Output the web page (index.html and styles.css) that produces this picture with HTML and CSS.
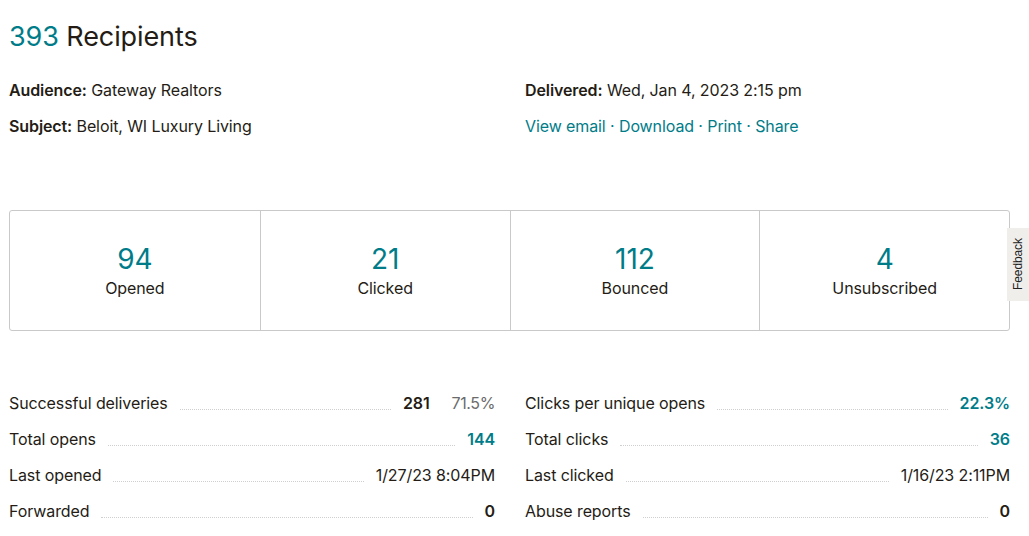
FILE: index.html
```html
<!DOCTYPE html>
<html>
<head>
<meta charset="utf-8">
<link rel="stylesheet" href="styles.css">
</head>
<body>
<main class="page">
  <h1 class="title"><span class="teal">393</span> Recipients</h1>
  <section class="info">
    <div class="info-col">
      <p class="info-line"><b>Audience:</b> Gateway Realtors</p>
      <p class="info-line"><b>Subject:</b> Beloit, WI Luxury Living</p>
    </div>
    <div class="info-col">
      <p class="info-line"><b>Delivered:</b> Wed, Jan 4, 2023 2:15 pm</p>
      <p class="info-line links"><a>View email</a> · <a>Download</a> · <a>Print</a> · <a>Share</a></p>
    </div>
  </section>
  <section class="stats">
    <div class="stat"><div class="num">94</div><div class="lbl">Opened</div></div>
    <div class="stat"><div class="num">21</div><div class="lbl">Clicked</div></div>
    <div class="stat"><div class="num">112</div><div class="lbl">Bounced</div></div>
    <div class="stat"><div class="num">4</div><div class="lbl">Unsubscribed</div></div>
  </section>
  <section class="summary">
    <div class="sum-col">
      <div class="row"><span class="k">Successful deliveries</span><span class="dots"></span><span class="v bold">281</span><span class="pct">71.5%</span></div>
      <div class="row"><span class="k">Total opens</span><span class="dots"></span><span class="v bold teal">144</span></div>
      <div class="row"><span class="k">Last opened</span><span class="dots"></span><span class="v">1/27/23 8:04PM</span></div>
      <div class="row"><span class="k">Forwarded</span><span class="dots"></span><span class="v bold">0</span></div>
    </div>
    <div class="sum-col">
      <div class="row"><span class="k">Clicks per unique opens</span><span class="dots"></span><span class="v bold teal">22.3%</span></div>
      <div class="row"><span class="k">Total clicks</span><span class="dots"></span><span class="v bold teal">36</span></div>
      <div class="row"><span class="k">Last clicked</span><span class="dots"></span><span class="v">1/16/23 2:11PM</span></div>
      <div class="row"><span class="k">Abuse reports</span><span class="dots"></span><span class="v bold">0</span></div>
    </div>
  </section>
</main>
<div class="feedback">Feedback</div>
</body>
</html>
```
FILE: styles.css
```css
* { box-sizing: border-box; }
html, body { margin: 0; padding: 0; background: #fff; }
body {
  font-family: Inter, "Noto Sans", sans-serif;
  color: #241c15;
  font-size: 16px;
  letter-spacing: -0.1px;
  overflow: hidden;
}
.page { padding: 19px 19px 0 9px; width: 1029px; }
.teal { color: #007c89; }
.title {
  margin: 0;
  font-size: 27px;
  font-weight: 400;
  line-height: 36px;
}
.info {
  display: grid;
  grid-template-columns: 516px 1fr;
  margin-top: 23px;
}
.info-line { margin: 0 0 12px; line-height: 24px; }
.info-line b { font-weight: 600; }
.links a { color: #007c89; }
.links { color: #007c89; }
.stats {
  margin-top: 60px;
  display: grid;
  grid-template-columns: repeat(4, 1fr);
  border: 1px solid #c9c9c9;
  border-radius: 3px;
  height: 121px;
}
.stat {
  display: flex;
  flex-direction: column;
  align-items: center;
  padding-top: 31px;
  border-left: 1px solid #c9c9c9;
}
.stat:first-child { border-left: none; }
.num { font-size: 28px; line-height: 34px; color: #007c89; }
.lbl { font-size: 16px; line-height: 24px; }
.summary {
  display: grid;
  grid-template-columns: 486px 485px;
  column-gap: 30px;
  margin-top: 60px;
}
.row {
  display: flex;
  align-items: baseline;
  height: 36px;
  line-height: 24px;
}
.dots {
  flex: 1;
  border-bottom: 1px dotted #cfcfcf;
  margin: 0 12px;
  position: relative;
  top: 1px;
}
.v { white-space: nowrap; }
.bold { font-weight: 600; }
.pct { color: #6b6b6b; margin-left: 22px; letter-spacing: -0.4px; }
.feedback {
  position: absolute;
  left: 1007px;
  top: 228px;
  width: 22px;
  height: 73px;
  background: #efeeea;
  writing-mode: vertical-rl;
  transform: rotate(180deg);
  font-family: "Liberation Sans", Arial, sans-serif;
  font-size: 12px;
  color: #222;
  display: flex;
  align-items: center;
  justify-content: center;
}
```
